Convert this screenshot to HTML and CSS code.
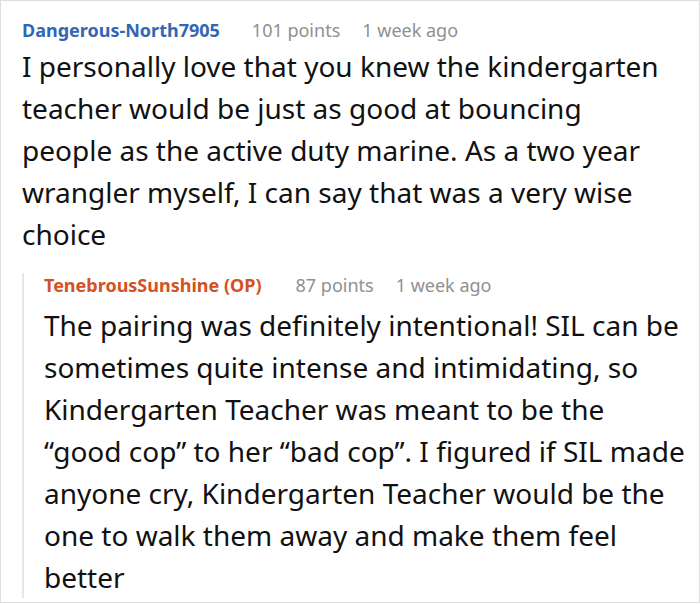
FILE: index.html
```html
<!DOCTYPE html>
<html>
<head>
<meta charset="utf-8">
<link rel="stylesheet" href="styles.css">
</head>
<body>
<div class="thread">
  <div class="comment">
    <div class="meta">
      <span class="author">Dangerous-North7905</span>
      <span class="points">101 points</span>
      <span class="time">1 week ago</span>
    </div>
    <p class="text main-text">I personally love that you knew the kindergarten teacher would be just as good at bouncing people as the active duty marine. As a two year wrangler myself, I can say that was a very wise choice</p>
    <div class="reply">
      <div class="meta">
        <span class="author op">TenebrousSunshine (OP)</span>
        <span class="points">87 points</span>
        <span class="time">1 week ago</span>
      </div>
      <p class="text">The pairing was definitely intentional! SIL can be sometimes quite intense and intimidating, so Kindergarten Teacher was meant to be the “good cop” to her “bad cop”. I figured if SIL made anyone cry, Kindergarten Teacher would be the one to walk them away and make them feel better</p>
    </div>
  </div>
</div>
</body>
</html>
```
FILE: styles.css
```css
html, body {
  margin: 0;
  padding: 0;
  background: #fff;
}
body {
  font-family: "Noto Sans", "Open Sans", sans-serif;
  color: #111;
}
.thread {
  width: 698px;
  height: 601px;
  border: 1px solid #dedede;
  overflow: hidden;
}
.comment {
  padding: 17px 10px 0 21px;
}
.meta {
  display: flex;
  gap: 22px;
  font-size: 18px;
  line-height: 24px;
  color: #909090;
  white-space: nowrap;
}
.author {
  font-weight: 700;
  color: #3366b3;
  margin-right: 10px;
}
.author.op {
  color: #d4521f;
  margin-right: 12px;
}
.text {
  margin: 3px 0 0;
  font-size: 28px;
  line-height: 42px;
}
.main-text {
  margin-right: 25px;
}
.reply {
  margin-top: 26px;
  border-left: 2px solid #e6e6e6;
  padding-left: 20px;
}
.reply .meta {
  margin-top: -8px;
}
.reply .text {
  margin-top: 7px;
  margin-bottom: -13px;
}
```
